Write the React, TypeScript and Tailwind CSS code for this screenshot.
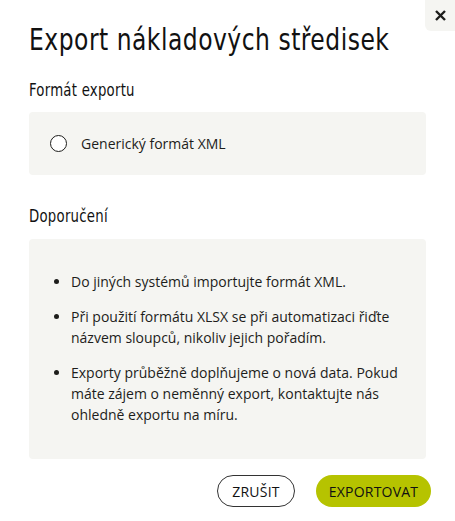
import { useState } from 'react';

const tips = [
  'Do jiných systémů importujte formát XML.',
  'Při použití formátu XLSX se při automatizaci řiďte názvem sloupců, nikoliv jejich pořadím.',
  'Exporty průběžně doplňujeme o nová data. Pokud máte zájem o neměnný export, kontaktujte nás ohledně exportu na míru.',
];

export default function App() {
  const [format, setFormat] = useState('');

  return (
    <div className="relative w-[455px] h-[521px] bg-white text-[#1d1d1b] font-['Open_Sans',sans-serif]">
      <button
        type="button"
        className="absolute right-0 top-0 w-[30px] h-[31px] bg-[#f5f5f2] rounded-bl-md flex items-center justify-center"
      >
        <svg width="11" height="11" viewBox="0 0 11 11">
          <path d="M1 1 L10 10 M10 1 L1 10" stroke="#1d1d1b" strokeWidth="2.4" />
        </svg>
      </button>

      <div className="px-[29px] pt-[20px]">
        <h1 className="whitespace-nowrap origin-left scale-x-[0.84] font-['DejaVu_Sans',sans-serif] font-stretch-condensed text-[31px] leading-[38px] tracking-[0.6px] text-[#111]">
          Export nákladových středisek
        </h1>

        <h2 className="mt-[21px] whitespace-nowrap origin-left scale-x-[0.82] font-['DejaVu_Sans',sans-serif] font-stretch-condensed text-[18px] leading-[22px] tracking-[0.3px] text-[#111]">
          Formát exportu
        </h2>
        <div className="mt-[11px] h-[63px] bg-[#f5f5f2] rounded-[4px] flex items-center px-[21px]">
          <label className="flex items-center gap-[14px] cursor-pointer text-[14px]">
            <input
              type="radio"
              name="format"
              value="xml"
              checked={format === 'xml'}
              onChange={(e) => setFormat(e.target.value)}
              className="appearance-none w-[17px] h-[17px] rounded-full border-[1.5px] border-[#1d1d1b] bg-white checked:border-[5px]"
            />
            Generický formát XML
          </label>
        </div>

        <h2 className="mt-[30px] whitespace-nowrap origin-left scale-x-[0.82] font-['DejaVu_Sans',sans-serif] font-stretch-condensed text-[18px] leading-[22px] tracking-[0.3px] text-[#111]">
          Doporučení
        </h2>
        <div className="mt-[12px] h-[220px] bg-[#f5f5f2] rounded-[4px] pt-[32px] pl-[42px] pr-[20px]">
          <ul className="list-disc flex flex-col gap-[14px] text-[14px] leading-[21px]">
            {tips.map((tip) => (
              <li key={tip}>{tip}</li>
            ))}
          </ul>
        </div>

        <div className="mt-[16px] flex justify-end gap-[21px] -mr-[5px]">
          <button
            type="button"
            className="h-[32px] w-[78px] flex items-center justify-center rounded-full border border-[#333] text-[14px] text-[#111] uppercase tracking-[0.2px]"
          >
            Zrušit
          </button>
          <button
            type="button"
            className="h-[32px] w-[115px] flex items-center justify-center rounded-full bg-[#b6c300] text-[14px] text-[#111] font-medium uppercase tracking-[0.2px]"
          >
            Exportovat
          </button>
        </div>
      </div>
    </div>
  );
}
